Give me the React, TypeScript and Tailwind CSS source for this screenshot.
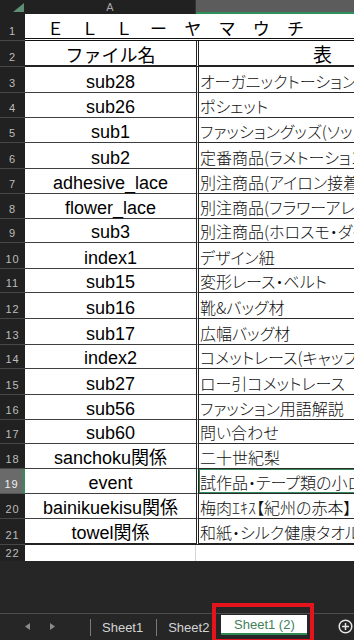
import React from "react";

type Row = { n: number; a: string; b: string; h: number };

const rows: Row[] = [
  { n: 3, a: "sub28", b: "オーガニックトーションレース", h: 26 },
  { n: 4, a: "sub26", b: "ポシェット", h: 25 },
  { n: 5, a: "sub1", b: "ファッショングッズ(ソックス)", h: 25 },
  { n: 6, a: "sub2", b: "定番商品(ラメトーションレース)", h: 26 },
  { n: 7, a: "adhesive_lace", b: "別注商品(アイロン接着レース)", h: 25 },
  { n: 8, a: "flower_lace", b: "別注商品(フラワーアレンジ)", h: 25 },
  { n: 9, a: "sub3", b: "別注商品(ホロスモ・ダイヤ)", h: 24 },
  { n: 10, a: "index1", b: "デザイン紐", h: 26 },
  { n: 11, a: "sub15", b: "変形レース・ベルト", h: 24 },
  { n: 12, a: "sub16", b: "靴&バッグ材", h: 26 },
  { n: 13, a: "sub17", b: "広幅バッグ材", h: 26 },
  { n: 14, a: "index2", b: "コメットレース(キャップ)", h: 24 },
  { n: 15, a: "sub27", b: "ロー引コメットレース", h: 26 },
  { n: 16, a: "sub56", b: "ファッション用語解説", h: 25 },
  { n: 17, a: "sub60", b: "問い合わせ", h: 24 },
  { n: 18, a: "sanchoku関係", b: "二十世紀梨", h: 25 },
  { n: 19, a: "event", b: "試作品・テープ類の小ロット", h: 25 },
  { n: 20, a: "bainikuekisu関係", b: "梅肉ｴｷｽ【紀州の赤本】", h: 25 },
  { n: 21, a: "towel関係", b: "和紙・シルク健康タオル", h: 26 },
];

const heightClass: Record<number, string> = {
  24: "h-[24px]",
  25: "h-[25px]",
  26: "h-[26px]",
};

function RowHeader({ n, selected }: { n: number; selected?: boolean }) {
  return (
    <div
      className={
        selected
          ? "w-[25px] shrink-0 flex items-end justify-center pb-[3px] bg-[#6a6a6a] border-b border-[#555] border-r-2 border-r-[#2f8f5b] text-[#f0f0f0] text-[11px] leading-none tracking-[1px] font-['Liberation_Sans',sans-serif]"
          : "w-[25px] shrink-0 flex items-end justify-center pb-[3px] bg-[#212121] border-b border-[#474747] text-[#bdbdbd] text-[11px] leading-none tracking-[1px] font-['Liberation_Sans',sans-serif]"
      }
    >
      {n}
    </div>
  );
}

export default function App() {
  return (
    <div className="w-[354px] h-[640px] bg-[#262626] overflow-hidden flex flex-col relative">
      {/* column header */}
      <div className="flex h-[14px] shrink-0">
        <div className="w-[25px] shrink-0 bg-[#212121] relative">
          <svg className="absolute left-[13px] top-[3px]" width="11" height="9" viewBox="0 0 11 9">
            <polygon points="11,0 11,9 0,9" fill="#5f8f72" />
          </svg>
        </div>
        <div className="w-[171px] shrink-0 bg-[#212121] flex items-center justify-center text-[11px] leading-none text-[#a8a8a8] font-['Liberation_Sans',sans-serif] border-r border-[#333]">
          A
        </div>
        <div className="flex-1 bg-[#5c5c5c] border-b-2 border-[#2f8f5b]" />
      </div>

      {/* row 1 merged */}
      <div className="flex h-[27px] shrink-0">
        <RowHeader n={1} />
        <div className="flex-1 bg-white border-b-[3px] border-double border-[#111] flex items-end pl-[22px] pb-[2px] whitespace-nowrap overflow-hidden text-[17px] leading-[17px] tracking-[0.15px] text-black font-['Noto_Sans_CJK_JP',sans-serif]">
          Ｅ　Ｌ　Ｌ　ー　ヤ　マ　ウ　チ
        </div>
      </div>

      {/* row 2 */}
      <div className="flex h-[26px] shrink-0">
        <RowHeader n={2} />
        <div className="w-[171px] shrink-0 bg-white border-b-2 border-[#222] flex items-end justify-center pb-[1px] text-[18px] leading-[20px] text-black font-['Noto_Sans_CJK_JP',sans-serif]">
          ファイル名
        </div>
        <div className="flex-1 min-w-0 bg-white border-b-2 border-[#222] border-l-[3px] border-double border-l-[#222] flex items-end pl-[114px] pb-[1px] text-[19px] leading-[20px] text-black font-['Noto_Sans_CJK_JP',sans-serif]">
          表
        </div>
      </div>

      {rows.map((r) => (
        <div key={r.n} className={`flex shrink-0 ${heightClass[r.h]}`}>
          <RowHeader n={r.n} selected={r.n === 19} />
          <div
            className={
              r.n === 21
                ? "w-[171px] shrink-0 bg-white border-b-2 border-[#222] flex items-end justify-center whitespace-nowrap text-[18px] leading-[19px] text-black font-['Liberation_Sans','Noto_Sans_CJK_JP',sans-serif]"
                : "w-[171px] shrink-0 bg-white border-b border-[#3f3f3f] flex items-end justify-center whitespace-nowrap text-[18px] leading-[19px] text-black font-['Liberation_Sans','Noto_Sans_CJK_JP',sans-serif]"
            }
          >
            {r.a}
          </div>
          <div
            className={
              r.n === 21
                ? "flex-1 min-w-0 relative bg-white border-b-2 border-[#222] border-l-[3px] border-double border-l-[#222] flex items-end pl-[1px] pb-[2px] whitespace-nowrap overflow-hidden text-[16px] leading-[17px] text-[#111] [font-feature-settings:'palt'] font-['Noto_Sans_CJK_JP',sans-serif] font-light"
                : "flex-1 min-w-0 relative bg-white border-b border-[#2a2a2a] border-l-[3px] border-double border-l-[#222] flex items-end pl-[1px] pb-[2px] whitespace-nowrap overflow-hidden text-[16px] leading-[17px] text-[#111] [font-feature-settings:'palt'] font-['Noto_Sans_CJK_JP',sans-serif] font-light"
            }
          >
            {r.b}
            {r.n === 19 && (
              <div className="absolute left-[-1px] top-[-1px] right-[-4px] bottom-[-1px] border-2 border-[#2f8a57]" />
            )}
          </div>
        </div>
      ))}

      {/* row 22 */}
      <div className="flex h-[16px] shrink-0">
        <div className="w-[25px] shrink-0 flex items-end justify-center pb-[2px] bg-[#212121] text-[#bdbdbd] text-[11px] leading-none tracking-[1px] font-['Liberation_Sans',sans-serif]">
          22
        </div>
        <div className="w-[171px] shrink-0 bg-white border-r border-[#d4d4d4]" />
        <div className="flex-1 bg-white" />
      </div>

      {/* empty dark area */}
      <div className="flex-1 bg-[#262626]" />

      {/* sheet tabs */}
      <div className="h-[27px] shrink-0 border-t border-[#4d4d4d] bg-[#262626] relative flex items-center font-['Liberation_Sans',sans-serif] text-[13px]">
        <svg className="absolute left-[25px] top-[9px]" width="5" height="7" viewBox="0 0 5 7">
          <polygon points="5,0 5,7 0,3.5" fill="#8a8a8a" />
        </svg>
        <svg className="absolute left-[50px] top-[9px]" width="5" height="7" viewBox="0 0 5 7">
          <polygon points="0,0 0,7 5,3.5" fill="#8a8a8a" />
        </svg>
        <div className="ml-[90px] w-px h-[17px] bg-[#7a7a7a]" />
        <div className="ml-[11px] text-[#d4d4d4] leading-none">Sheet1</div>
        <div className="ml-[13px] w-px h-[17px] bg-[#7a7a7a]" />
        <div className="ml-[11px] text-[#d4d4d4] leading-none">Sheet2</div>
        <div className="ml-[12px] self-start mt-[1px] w-[86px] h-[20px] bg-white border-b-2 border-[#2f8a57] flex items-center justify-center text-[#3f7f5a] leading-none">
          Sheet1 (2)
        </div>
        <svg className="absolute left-[338px] top-[5px]" width="15" height="15" viewBox="0 0 15 15">
          <circle cx="7.5" cy="7.5" r="6.3" fill="none" stroke="#e6e6e6" strokeWidth="1.5" />
          <line x1="7.5" y1="4" x2="7.5" y2="11" stroke="#e6e6e6" strokeWidth="1.5" />
          <line x1="4" y1="7.5" x2="11" y2="7.5" stroke="#e6e6e6" strokeWidth="1.5" />
        </svg>
        <div className="absolute left-[212px] top-[-11px] w-[102px] h-[40px] border-4 border-[#e5141c]" />
      </div>
    </div>
  );
}
